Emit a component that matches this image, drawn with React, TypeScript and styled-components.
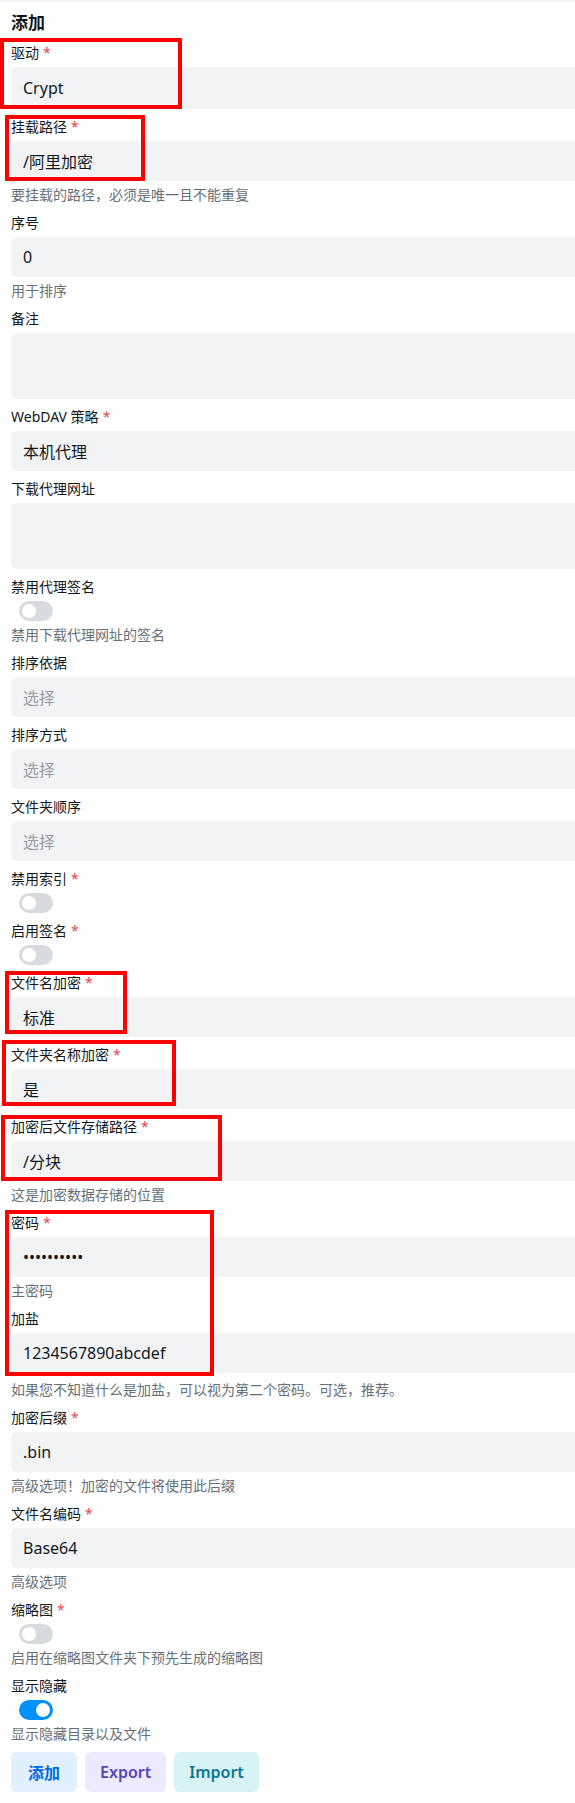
import React from "react";
import styled, { createGlobalStyle } from "styled-components";

type Tone = "blue" | "violet" | "cyan";

interface FieldProps {
  label: string;
  required?: boolean;
  help?: string;
  helpSpaced?: boolean;
  children: React.ReactNode;
}

interface MarkBox {
  $top: number;
  $left: number;
  $width: number;
  $height: number;
}

const tones: Record<Tone, { bg: string; fg: string }> = {
  blue: { bg: "#e1f0ff", fg: "#006adc" },
  violet: { bg: "#ede9fe", fg: "#5746af" },
  cyan: { bg: "#d8f3f6", fg: "#0c7792" },
};

const Field = ({ label, required, help, helpSpaced, children }: FieldProps) => (
  <FieldBox>
    <Label>
      {label}
      {required && <Star>*</Star>}
    </Label>
    {children}
    {help && <Help $spaced={helpSpaced}>{help}</Help>}
  </FieldBox>
);

const App = () => {
  return (
    <React.Fragment>
      <GlobalStyle />
      <Page>
        <Title>添加</Title>
        <Form>
          <Annotated>
            <Mark $top={-5} $left={-11} $width={182} $height={71} />
            <Field label="驱动" required>
              <Select $height={42}>Crypt</Select>
            </Field>
          </Annotated>
          <Annotated>
            <Mark $top={-2} $left={-6} $width={140} $height={66} />
            <Field
              label="挂载路径"
              required
              help="要挂载的路径，必须是唯一且不能重复"
            >
              <TextInput readOnly defaultValue="/阿里加密" />
            </Field>
          </Annotated>
          <Field label="序号" help="用于排序">
            <TextInput readOnly defaultValue="0" />
          </Field>
          <Field label="备注">
            <TextArea readOnly defaultValue="" />
          </Field>
          <Field label="WebDAV 策略" required>
            <Select>本机代理</Select>
          </Field>
          <Field label="下载代理网址">
            <TextArea readOnly defaultValue="" />
          </Field>
          <Field label="禁用代理签名" help="禁用下载代理网址的签名">
            <Switch />
          </Field>
          <Field label="排序依据">
            <Select $placeholder>选择</Select>
          </Field>
          <Field label="排序方式">
            <Select $placeholder>选择</Select>
          </Field>
          <Field label="文件夹顺序">
            <Select $placeholder>选择</Select>
          </Field>
          <Field label="禁用索引" required>
            <Switch />
          </Field>
          <Field label="启用签名" required>
            <Switch />
          </Field>
          <Annotated>
            <Mark $top={-2} $left={-6} $width={122} $height={63} />
            <Field label="文件名加密" required>
              <Select>标准</Select>
            </Field>
          </Annotated>
          <Annotated>
            <Mark $top={-5} $left={-9} $width={174} $height={66} />
            <Field label="文件夹名称加密" required>
              <Select>是</Select>
            </Field>
          </Annotated>
          <Annotated>
            <Mark $top={-2} $left={-10} $width={221} $height={66} />
            <Field
              label="加密后文件存储路径"
              required
              help="这是加密数据存储的位置"
            >
              <TextInput readOnly defaultValue="/分块" />
            </Field>
          </Annotated>
          <Annotated>
            <Mark $top={-3} $left={-6} $width={209} $height={166} />
            <Field label="密码" required help="主密码">
              <TextInput type="password" readOnly defaultValue="1234567890" />
            </Field>
            <Field
              label="加盐"
              help="如果您不知道什么是加盐，可以视为第二个密码。可选，推荐。"
              helpSpaced
            >
              <TextInput readOnly defaultValue="1234567890abcdef" />
            </Field>
          </Annotated>
          <Field
            label="加密后缀"
            required
            help="高级选项！加密的文件将使用此后缀"
          >
            <TextInput readOnly defaultValue=".bin" />
          </Field>
          <Field label="文件名编码" required help="高级选项">
            <Select>Base64</Select>
          </Field>
          <Field
            label="缩略图"
            required
            help="启用在缩略图文件夹下预先生成的缩略图"
          >
            <Switch />
          </Field>
          <Field label="显示隐藏" help="显示隐藏目录以及文件">
            <Switch $on />
          </Field>
          <ButtonRow>
            <Button $tone="blue">添加</Button>
            <Button $tone="violet">Export</Button>
            <Button $tone="cyan">Import</Button>
          </ButtonRow>
        </Form>
      </Page>
    </React.Fragment>
  );
};

const GlobalStyle = createGlobalStyle`
  html, body {
    margin: 0;
    padding: 0;
    background: #ffffff;
  }
  body {
    font-family: "Noto Sans", "Noto Sans CJK SC", sans-serif;
    color: #11181c;
    overflow-x: hidden;
  }
`;

const Page = styled.div`
  width: 100%;
  box-sizing: border-box;
  padding: 11px 0 11px 11px;
  overflow: hidden;
  box-shadow: inset 0 2px 2px -1px rgba(0, 0, 0, 0.06);
`;

const Title = styled.h2`
  margin: 0 0 8px;
  font-size: 17px;
  line-height: 24px;
  font-weight: 700;
  color: #11181c;
`;

const Form = styled.div`
  display: flex;
  flex-direction: column;
  gap: 8px;
  width: 600px;
`;

const Annotated = styled.div`
  position: relative;
  display: flex;
  flex-direction: column;
  gap: 8px;
`;

const Mark = styled.div<MarkBox>`
  position: absolute;
  top: ${(p) => p.$top}px;
  left: ${(p) => p.$left}px;
  width: ${(p) => p.$width}px;
  height: ${(p) => p.$height}px;
  box-sizing: border-box;
  border: 4px solid #ff0000;
  pointer-events: none;
  z-index: 2;
`;

const FieldBox = styled.div`
  display: flex;
  flex-direction: column;
  align-items: flex-start;
`;

const Label = styled.label`
  font-size: 14px;
  line-height: 20px;
  margin-bottom: 4px;
  color: #11181c;
`;

const Star = styled.span`
  margin-left: 4px;
  color: #e5484d;
`;

const Help = styled.div<{ $spaced?: boolean }>`
  margin-top: ${(p) => (p.$spaced ? 7 : 4)}px;
  font-size: 14px;
  line-height: 20px;
  color: #687076;
`;

const TextInput = styled.input<{ $height?: number }>`
  box-sizing: border-box;
  width: 100%;
  height: ${(p) => p.$height ?? 40}px;
  padding: 0 12px;
  border: none;
  outline: none;
  border-radius: 6px;
  background: #f1f3f5;
  font-family: inherit;
  font-size: 16px;
  color: #11181c;
`;

const Select = styled.div<{ $height?: number; $placeholder?: boolean }>`
  box-sizing: border-box;
  display: flex;
  align-items: center;
  width: 100%;
  height: ${(p) => p.$height ?? 40}px;
  padding: 0 12px;
  border-radius: 6px;
  background: #f1f3f5;
  font-size: 16px;
  color: ${(p) => (p.$placeholder ? "#969ca1" : "#11181c")};
`;

const TextArea = styled.textarea`
  box-sizing: border-box;
  display: block;
  width: 100%;
  height: 66px;
  padding: 8px 12px;
  border: none;
  outline: none;
  resize: none;
  border-radius: 6px;
  background: #f1f3f5;
  font-family: inherit;
  font-size: 16px;
`;

const Switch = styled.span<{ $on?: boolean }>`
  position: relative;
  display: block;
  width: 34px;
  height: 20px;
  margin-left: 8px;
  border-radius: 10px;
  background: ${(p) => (p.$on ? "#0091ff" : "#d7dbdf")};

  &::after {
    content: "";
    position: absolute;
    top: 3px;
    left: ${(p) => (p.$on ? 17 : 3)}px;
    width: 14px;
    height: 14px;
    border-radius: 50%;
    background: #ffffff;
  }
`;

const ButtonRow = styled.div`
  display: flex;
  gap: 8px;
`;

const Button = styled.button<{ $tone: Tone }>`
  min-width: 66px;
  height: 40px;
  padding: 0 15px;
  border: none;
  border-radius: 6px;
  background: ${(p) => tones[p.$tone].bg};
  color: ${(p) => tones[p.$tone].fg};
  font-family: inherit;
  font-size: 16px;
  font-weight: 600;
  cursor: pointer;
`;

export default App;
